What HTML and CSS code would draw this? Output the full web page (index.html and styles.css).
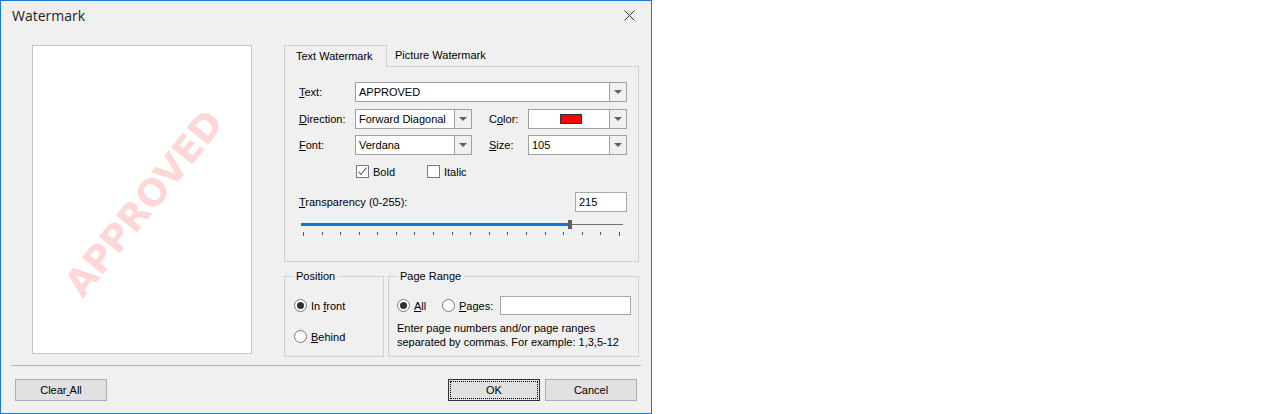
FILE: index.html
```html
<!DOCTYPE html>
<html>
<head>
<meta charset="utf-8">
<title>Watermark</title>
<link rel="stylesheet" href="styles.css">
</head>
<body>
<div class="dialog">
  <div class="titlebar">
    <span class="title">Watermark</span>
    <svg class="close" width="11" height="11" viewBox="0 0 11 11"><path d="M0.5 0.5L10.5 10.5M10.5 0.5L0.5 10.5" stroke="#333" stroke-width="1" fill="none"/></svg>
  </div>
  <div class="main">
    <div class="preview"><span class="wm">APPROVED</span></div>
    <div class="side">
      <div class="tabs">
        <div class="tab active">Text Watermark</div>
        <div class="tab">Picture Watermark</div>
      </div>
      <div class="panel">
        <div class="row r1">
          <span class="lbl"><u>T</u>ext:</span>
          <div class="combo c-text"><div class="field">APPROVED</div><div class="dd"><i class="arrow"></i></div></div>
        </div>
        <div class="row r2">
          <span class="lbl"><u>D</u>irection:</span>
          <div class="combo c-dir"><div class="field">Forward Diagonal</div><div class="dd"><i class="arrow"></i></div></div>
          <span class="lbl2">C<u>o</u>lor:</span>
          <div class="combo c-small"><div class="field center"><span class="swatch"></span></div><div class="dd"><i class="arrow"></i></div></div>
        </div>
        <div class="row r3">
          <span class="lbl"><u>F</u>ont:</span>
          <div class="combo c-dir"><div class="field">Verdana</div><div class="dd"><i class="arrow"></i></div></div>
          <span class="lbl2"><u>S</u>ize:</span>
          <div class="combo c-small"><div class="field">105</div><div class="dd"><i class="arrow"></i></div></div>
        </div>
        <div class="checks">
          <div class="check bold-item">
            <span class="box"><svg width="11" height="11" viewBox="0 0 11 11"><path d="M1.5 5.5L4 8.5L9.5 1.5" stroke="#555" stroke-width="1.1" fill="none"/></svg></span>
            <span>Bold</span>
          </div>
          <div class="check">
            <span class="box"></span>
            <span>Italic</span>
          </div>
        </div>
        <div class="trow">
          <span class="tlbl"><u>T</u>ransparency (0-255):</span>
          <div class="edit e-trans">215</div>
        </div>
        <div class="slider">
          <div class="fill"></div>
          <div class="thumb"></div>
          <div class="rest"></div>
        </div>
        <div class="ticks">
          <i></i><i></i><i></i><i></i><i></i><i></i><i></i><i></i><i></i><i></i><i></i><i></i><i></i><i></i><i></i><i></i><i></i><i></i>
        </div>
      </div>
      <div class="groups">
        <fieldset class="grp g-pos">
          <legend>Position</legend>
          <div class="opt first"><span class="radio on"></span><span>In <u>f</u>ront</span></div>
          <div class="opt second"><span class="radio"></span><span><u>B</u>ehind</span></div>
        </fieldset>
        <fieldset class="grp g-range">
          <legend>Page Range</legend>
          <div class="prow">
            <div class="opt all"><span class="radio on"></span><span><u>A</u>ll</span></div>
            <div class="opt"><span class="radio"></span><span><u>P</u>ages:</span></div>
            <div class="edit e-pages"></div>
          </div>
          <div class="hint">Enter page numbers and/or page ranges<br>separated by commas. For example: 1,3,5-12</div>
        </fieldset>
      </div>
    </div>
  </div>
  <div class="sep"></div>
  <div class="footer">
    <div class="button">Clear<u>&nbsp;</u>All</div>
    <div class="spacer"></div>
    <div class="button default">OK</div>
    <div class="button">Cancel</div>
  </div>
</div>
</body>
</html>
```

FILE: styles.css
```css
html, body {
  margin: 0;
  padding: 0;
  background: #ffffff;
}

.dialog {
  width: 652px;
  height: 414px;
  box-sizing: border-box;
  border: 1px solid #1c7ad2;
  background: #f0f0f0;
  font-family: "Liberation Sans", Arial, sans-serif;
  font-size: 11px;
  color: #000;
  overflow: hidden;
}

u { text-decoration: underline; text-underline-offset: 1px; }

.titlebar {
  height: 31px;
  display: flex;
  align-items: flex-start;
  justify-content: space-between;
}

.title {
  font-family: "Open Sans", "Noto Sans", sans-serif;
  font-size: 14px;
  color: #222;
  padding-left: 11px;
  padding-top: 5px;
  line-height: 20px;
}

.close {
  margin-top: 9px;
  margin-right: 16px;
}

.main {
  display: flex;
  padding-top: 13px;
  padding-left: 31px;
  height: 312px;
}

.preview {
  width: 220px;
  height: 309px;
  box-sizing: border-box;
  border: 1px solid #c3c3c3;
  background: #fff;
  display: flex;
  align-items: center;
  justify-content: center;
  overflow: hidden;
}

.wm {
  font-family: "DejaVu Sans", Verdana, sans-serif;
  font-weight: bold;
  font-size: 37px;
  color: #ffd7d7;
  white-space: nowrap;
  transform: translate(2px, 4px) rotate(-51deg);
}

.side {
  margin-left: 32px;
  width: 355px;
  display: flex;
  flex-direction: column;
}

.tabs {
  display: flex;
  height: 21px;
}

.tab {
  height: 21px;
  line-height: 21px;
  padding-left: 8px;
}

.tab.active {
  position: relative;
  z-index: 1;
  width: 103px;
  height: 22px;
  box-sizing: border-box;
  border: 1px solid #d0d0d0;
  border-bottom: none;
  background: #f0f0f0;
  padding-left: 11px;
  line-height: 20px;
}

.panel {
  height: 196px;
  box-sizing: border-box;
  border: 1px solid #d0d0d0;
  padding: 15px 0 0 14px;
}

.row {
  display: flex;
  align-items: center;
  height: 20px;
}
.r2 { margin-top: 7px; }
.r3 { margin-top: 6px; }

.lbl { width: 56px; }
.lbl2 { width: 39px; margin-left: 17px; }

.combo {
  height: 20px;
  box-sizing: border-box;
  border: 1px solid #a0a0a0;
  display: flex;
  background: #fff;
}
.c-text { width: 272px; }
.c-dir { width: 117px; }
.c-small { width: 99px; }

.field {
  flex: 1;
  padding-left: 3px;
  line-height: 18px;
  white-space: nowrap;
  overflow: hidden;
}
.field.center {
  display: flex;
  align-items: center;
  justify-content: center;
}

.swatch {
  width: 22px;
  height: 10px;
  box-sizing: border-box;
  border: 1px solid #333;
  background: #ff0000;
}

.dd {
  width: 16px;
  border-left: 1px solid #a0a0a0;
  background: #f0f0f0;
  display: flex;
  align-items: center;
  justify-content: center;
}

.arrow {
  width: 0;
  height: 0;
  border-left: 4px solid transparent;
  border-right: 4px solid transparent;
  border-top: 4px solid #606060;
}

.checks {
  display: flex;
  margin-top: 10px;
  padding-left: 57px;
  height: 13px;
  align-items: center;
}

.check {
  display: flex;
  align-items: center;
  gap: 4px;
}
.bold-item { width: 71px; }

.box {
  width: 13px;
  height: 13px;
  box-sizing: border-box;
  border: 1px solid #7a7a7a;
  background: #fff;
  display: flex;
  align-items: center;
  justify-content: center;
}

.trow {
  display: flex;
  align-items: center;
  height: 20px;
  margin-top: 14px;
}
.tlbl { width: 276px; }

.edit {
  height: 20px;
  box-sizing: border-box;
  border: 1px solid #a8a8a8;
  background: #fff;
  line-height: 18px;
  padding-left: 3px;
}
.e-trans { width: 52px; }

.slider {
  display: flex;
  align-items: center;
  height: 9px;
  width: 322px;
  margin-top: 8px;
  margin-left: 2px;
}
.fill {
  width: 267px;
  height: 3px;
  background: #0a78d4;
}
.thumb {
  width: 4px;
  height: 9px;
  background: #5f5f5f;
}
.rest {
  flex: 1;
  height: 1px;
  background: #707070;
}

.ticks {
  display: flex;
  justify-content: space-between;
  width: 317px;
  margin-left: 4px;
  margin-top: 3px;
  height: 4px;
}
.ticks i {
  width: 1px;
  height: 3px;
  background: #555;
}
.ticks i:first-child, .ticks i:last-child { height: 4px; }

.groups {
  display: flex;
  gap: 4px;
  margin-top: 8px;
}

.grp {
  margin: 0;
  padding: 0;
  min-inline-size: 0;
  border: 1px solid #d0d0d0;
  height: 87px;
  box-sizing: border-box;
}
.g-pos { width: 100px; padding-left: 9px; }
.g-range { width: 251px; padding-left: 8px; }

legend {
  padding: 0 3px;
  margin-left: 0;
  line-height: 13px;
}
.g-pos legend { margin-left: -1px; }
.g-range legend { margin-left: 0px; }

.opt {
  display: flex;
  align-items: center;
  gap: 4px;
  height: 13px;
}
.g-pos .first { margin-top: 16px; }
.g-pos .second { margin-top: 18px; }

.radio {
  width: 13px;
  height: 13px;
  box-sizing: border-box;
  border: 1px solid #7a7a7a;
  border-radius: 50%;
  background: #fff;
  display: flex;
  align-items: center;
  justify-content: center;
}
.radio.on::after {
  content: "";
  width: 7px;
  height: 7px;
  border-radius: 50%;
  background: #333;
}

.prow {
  display: flex;
  align-items: center;
  height: 19px;
  margin-top: 13px;
}
.opt.all { width: 45px; }
.e-pages {
  width: 131px;
  height: 19px;
  margin-left: 7px;
}

.hint {
  margin-top: 6px;
  line-height: 14px;
}

.sep {
  margin: 8px 10px 0 10px;
  border-top: 1px solid #b4b4b4;
}

.footer {
  display: flex;
  padding: 13px 14px 0 14px;
  gap: 5px;
}
.spacer { flex: 1; }

.button {
  width: 92px;
  height: 22px;
  box-sizing: border-box;
  border: 1px solid #adadad;
  background: #e1e1e1;
  line-height: 20px;
  text-align: center;
}
.button.default {
  border-color: #333;
  outline: 1px dotted #000;
  outline-offset: -3px;
}
```
